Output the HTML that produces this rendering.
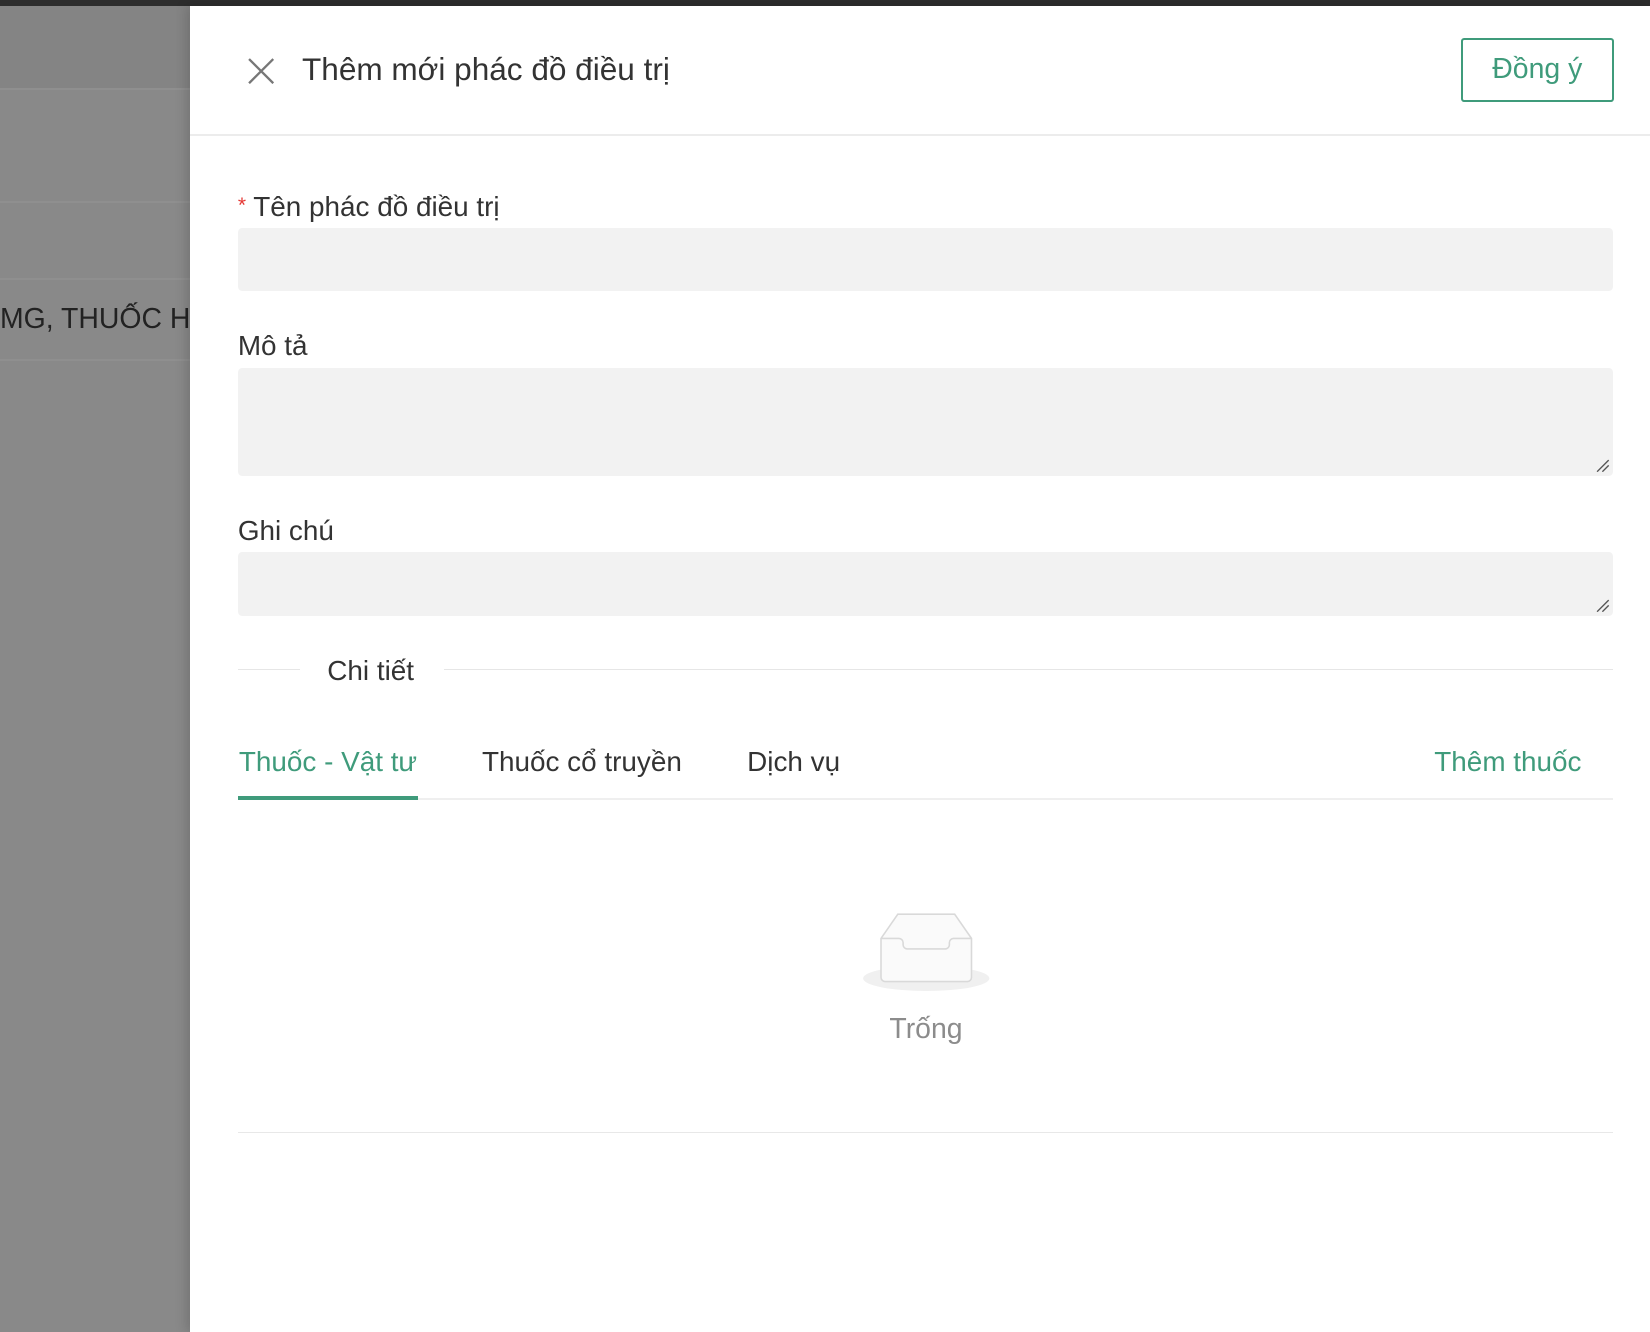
<!DOCTYPE html>
<html><head><meta charset="utf-8"><style>
html,body{margin:0;padding:0;}
body{width:1568px;height:1266px;zoom:1.05230;overflow:hidden;position:relative;font-family:"Liberation Sans","Noto Sans CJK JP",sans-serif;background:#888;}
.abs{position:absolute}
.topbar{left:0;top:0;width:1568px;height:6px;background:#2d2d2d}
.left{left:0;top:6px;width:181px;height:1260px;background:#898989}
.band{left:0;width:181px;height:2px;background:#8f8f8f}
.drawer{left:181px;top:6px;width:1387px;height:1260px;background:#fff;box-shadow:-4px 0 10px rgba(0,0,0,.15)}
.lbl{font-size:26.5px;color:#333;left:226px;line-height:30px}
.inp{left:226px;width:1307px;background:#f2f2f2;border-radius:4px}
.green{color:#3f9b7b}
.tab{font-size:26.5px;line-height:30px;top:709px}
</style></head><body>
<div class="abs topbar"></div>
<div class="abs left"></div>
<div class="abs" style="left:0;top:6px;width:181px;height:79px;background:#848484"></div>
<div class="abs band" style="top:84px"></div>
<div class="abs band" style="top:191px"></div>
<div class="abs band" style="top:264px"></div>
<div class="abs band" style="top:341px"></div>
<div class="abs" style="left:0;top:287px;width:181px;overflow:hidden;white-space:nowrap;font-size:27px;color:#222;line-height:34px">MG, THUỐC HO</div>
<div class="abs drawer"></div>
<svg class="abs" style="left:236px;top:55px" width="25" height="25" viewBox="0 0 25 25"><path d="M1 1L24 24M24 1L1 24" stroke="#777" stroke-width="2.2" fill="none"/></svg>
<div class="abs" style="left:287px;top:49px;font-size:30px;color:#333;line-height:34px">Thêm mới phác đồ điều trị</div>
<div class="abs green" style="left:1388px;top:36px;width:142px;height:57px;border:2px solid #3f9b7b;border-radius:3px;font-size:27px;line-height:57px;text-align:center">Đồng ý</div>
<div class="abs" style="left:181px;top:127px;width:1387px;height:2px;background:#ececec"></div>
<div class="abs lbl" style="top:181px"><span style="color:#e53935;font-size:20px;vertical-align:4px">*</span> Tên phác đồ điều trị</div>
<div class="abs inp" style="top:217px;height:60px"></div>
<div class="abs lbl" style="top:314px">Mô tả</div>
<div class="abs inp" style="top:350px;height:102px"></div>
<svg class="abs" style="left:1516px;top:435px" width="14" height="14"><path d="M2 13L13 2M7 13L13 7" stroke="#555" stroke-width="1.3"/></svg>
<div class="abs lbl" style="top:489px">Ghi chú</div>
<div class="abs inp" style="top:525px;height:60px"></div>
<svg class="abs" style="left:1516px;top:568px" width="14" height="14"><path d="M2 13L13 2M7 13L13 7" stroke="#555" stroke-width="1.3"/></svg>
<div class="abs" style="left:226px;top:636px;width:59px;height:1px;background:#e6e6e6"></div>
<div class="abs" style="left:422px;top:636px;width:1111px;height:1px;background:#e6e6e6"></div>
<div class="abs lbl" style="left:311px;top:622px">Chi tiết</div>
<div class="abs tab green" style="left:227px">Thuốc - Vật tư</div>
<div class="abs tab" style="left:458px;color:#333">Thuốc cổ truyền</div>
<div class="abs tab" style="left:710px;color:#333">Dịch vụ</div>
<div class="abs tab green" style="left:1363px">Thêm thuốc</div>
<div class="abs" style="left:226px;top:758px;width:1307px;height:2px;background:#efefef"></div>
<div class="abs" style="left:226px;top:756px;width:171px;height:4px;background:#3f9b7b"></div>
<svg class="abs" style="left:818px;top:865px" width="124" height="80" viewBox="0 0 124 80">
<ellipse cx="62" cy="65" rx="60" ry="12" fill="#f0f0f0"/>
<path d="M19 27L35 4H89L105 27V64a4 4 0 0 1-4 4H23a4 4 0 0 1-4-4Z" fill="#fafafa" stroke="#d9d9d9" stroke-width="1.5"/>
<path d="M19 27H36a4 4 0 0 1 4 4v2a4 4 0 0 0 4 4H80a4 4 0 0 0 4-4v-2a4 4 0 0 1 4-4H105" fill="none" stroke="#d9d9d9" stroke-width="1.5"/>
</svg>
<div class="abs" style="left:780px;top:963px;width:200px;text-align:center;font-size:27px;color:#8c8c8c;line-height:32px">Trống</div>
<div class="abs" style="left:226px;top:1076px;width:1307px;height:1px;background:#e8e8e8"></div>
</body></html>
